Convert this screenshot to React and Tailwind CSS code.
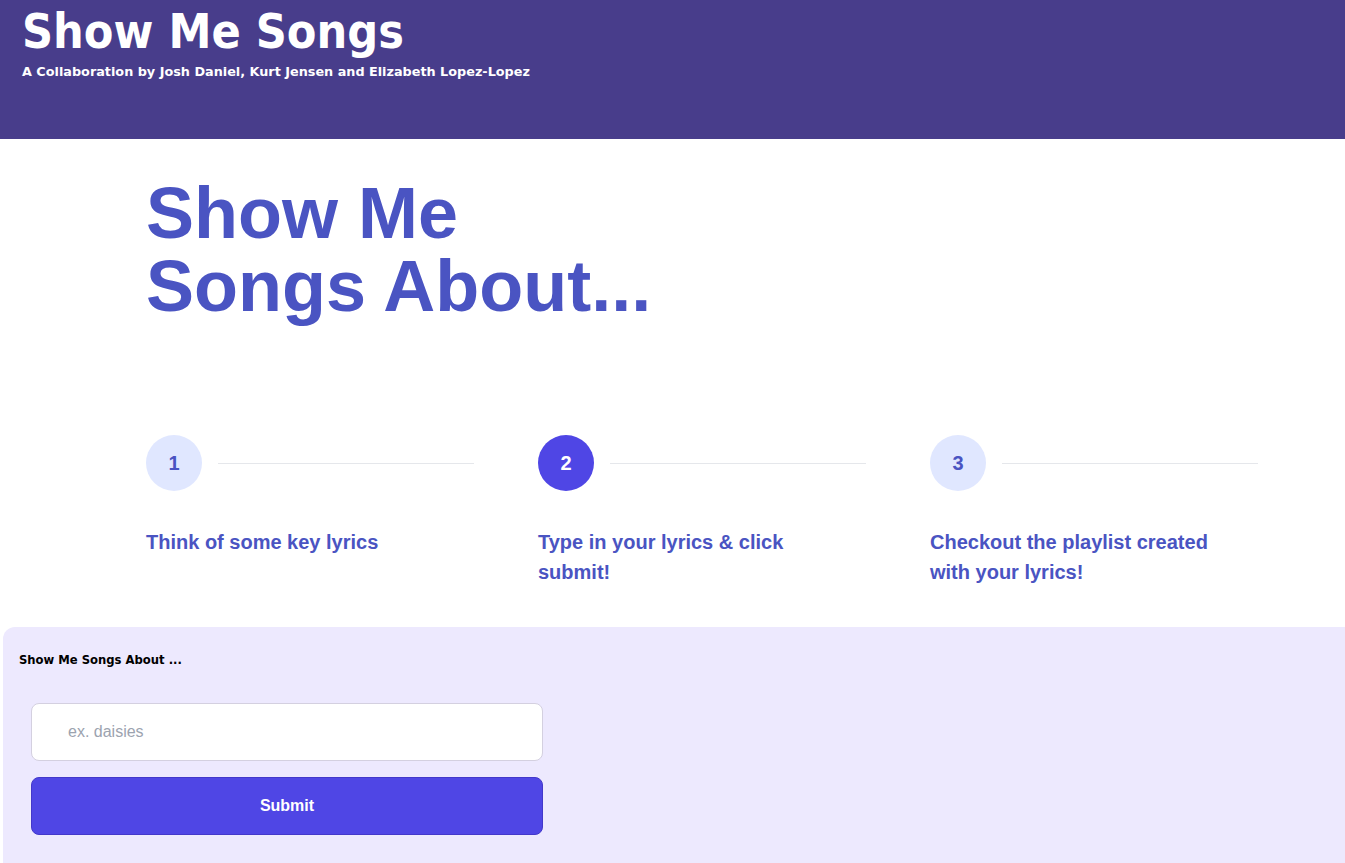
const steps = [
  { n: 1, text: "Think of some key lyrics", active: false },
  { n: 2, text: "Type in your lyrics & click submit!", active: true },
  { n: 3, text: "Checkout the playlist created with your lyrics!", active: false },
];

function Step({ step }) {
  return (
    <div className="w-[328px]">
      <div className="flex items-center gap-4">
        <div
          className={
            step.active
              ? "w-14 h-14 shrink-0 rounded-full bg-[#4f46e5] text-white flex items-center justify-center text-xl font-bold"
              : "w-14 h-14 shrink-0 rounded-full bg-[#e0e7ff] text-[#4a54c2] flex items-center justify-center text-xl font-bold"
          }
        >
          {step.n}
        </div>
        <div className="flex-1 h-px bg-[#e5e7eb]"></div>
      </div>
      <p className="mt-9 w-[300px] text-[20px] leading-[30px] font-bold text-[#4a54c2]">
        {step.text}
      </p>
    </div>
  );
}

export default function App() {
  return (
    <div className="min-h-[863px] bg-white font-['Liberation_Sans',Arial,sans-serif]">
      <header className="h-[139px] bg-[#483d8b] px-[22px] pt-[2px] text-white">
        <h1 className="text-[48px] leading-[58px] font-bold font-['DejaVu_Sans_Condensed','DejaVu_Sans',sans-serif]">
          Show Me Songs
        </h1>
        <p className="text-[12.8px] leading-[24px] font-bold font-['DejaVu_Sans',sans-serif]">
          A Collaboration by Josh Daniel, Kurt Jensen and Elizabeth Lopez-Lopez
        </p>
      </header>

      <section className="pl-[146px] pt-[38px]">
        <h2 className="text-[72px] leading-[73px] font-bold text-[#4a54c2]">
          Show Me
          <br />
          Songs About...
        </h2>

        <div className="flex gap-16 mt-[112px]">
          {steps.map((step) => (
            <Step key={step.n} step={step} />
          ))}
        </div>
      </section>

      <section className="ml-[3px] mt-[40px] rounded-tl-xl bg-[#ede9fe] pt-[25px] pb-[48px] px-4">
        <p className="text-[11.6px] font-bold text-black font-['DejaVu_Sans',sans-serif]">
          Show Me Songs About ...
        </p>
        <div className="mt-[34px] ml-3 w-[512px] flex flex-col gap-4">
          <input
            type="text"
            placeholder="ex. daisies"
            className="h-[58px] w-full rounded-lg border border-[#d4d0e0] bg-white px-9 text-base text-gray-700 placeholder:text-[#9ca3af] outline-none"
          />
          <button className="h-[58px] w-full rounded-lg bg-[#4f46e5] border border-[#4338ca] text-white text-base font-bold">
            Submit
          </button>
        </div>
      </section>
    </div>
  );
}
